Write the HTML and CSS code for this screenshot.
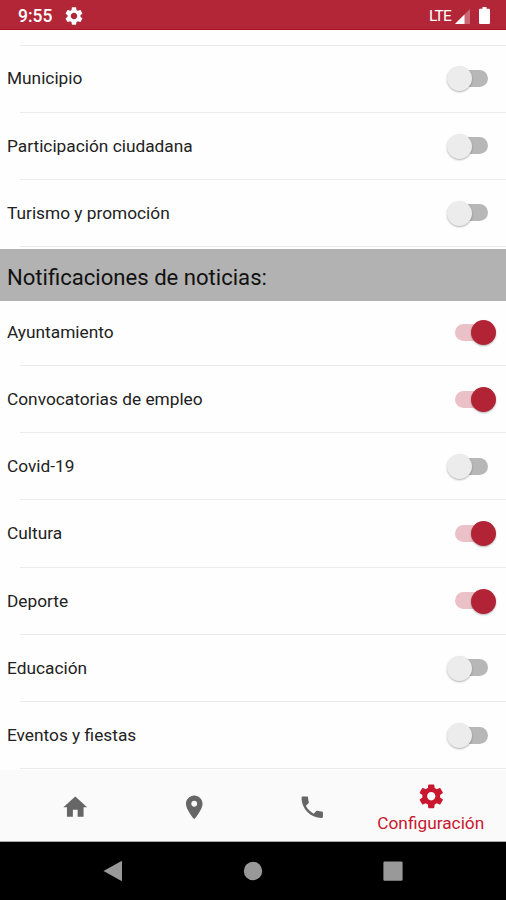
FILE: index.html
```html
<!DOCTYPE html>
<html lang="es">
<head>
  <meta charset="UTF-8" />
  <meta name="viewport" content="width=device-width, initial-scale=1.0"/>
  <title>Configuración</title>
  <link rel="stylesheet" href="styles.css">
</head>
<body>
  <div class="status-bar">
    <span class="time">9:55</span>
    <svg class="status-gear" viewBox="2 2 20 20"><path d="M19.14 12.94c.04-.3.06-.61.06-.94s-.02-.64-.07-.94l2.03-1.58c.18-.14.23-.41.12-.61l-1.92-3.32c-.12-.22-.37-.29-.59-.22l-2.39.96c-.5-.38-1.03-.7-1.62-.94L14.4 2.81c-.04-.24-.24-.41-.48-.41h-3.84c-.24 0-.43.17-.47.41l-.36 2.54c-.59.24-1.13.57-1.62.94l-2.39-.96c-.22-.08-.47 0-.59.22L2.74 8.87c-.12.21-.08.47.12.61l2.03 1.58c-.05.3-.09.63-.09.94s.02.64.07.94l-2.03 1.58c-.18.14-.23.41-.12.61l1.92 3.32c.12.22.37.29.59.22l2.39-.96c.5.38 1.03.7 1.62.94l.36 2.54c.05.24.24.41.48.41h3.84c.24 0 .44-.17.47-.41l.36-2.54c.59-.24 1.13-.56 1.62-.94l2.39.96c.22.08.47 0 .59-.22l1.92-3.32c.12-.22.07-.47-.12-.61l-2.01-1.58zM12 15.6c-1.98 0-3.6-1.62-3.6-3.6s1.62-3.6 3.6-3.6 3.6 1.62 3.6 3.6-1.62 3.6-3.6 3.6z"/></svg>
    <span class="network">LTE</span>
    <svg class="signal" viewBox="0 0 15 15"><path opacity=".3" d="M15 0v15H0z"/><path d="M9.5 5.5V15H0z"/></svg>
    <svg class="battery" viewBox="0 0 11 17"><path d="M3.5 0h4v1.7H10a1 1 0 0 1 1 1V16a1 1 0 0 1-1 1H1a1 1 0 0 1-1-1V2.7a1 1 0 0 1 1-1h2.5z"/></svg>
  </div>

  <main class="content">
    <div class="list list-top">
      <div class="row"><span class="label">Municipio</span><span class="switch"></span></div>
      <div class="row"><span class="label">Participación ciudadana</span><span class="switch"></span></div>
      <div class="row"><span class="label">Turismo y promoción</span><span class="switch"></span></div>
    </div>

    <h2 class="section-title">Notificaciones de noticias:</h2>

    <div class="list">
      <div class="row first"><span class="label">Ayuntamiento</span><span class="switch on"></span></div>
      <div class="row"><span class="label">Convocatorias de empleo</span><span class="switch on"></span></div>
      <div class="row"><span class="label">Covid-19</span><span class="switch"></span></div>
      <div class="row"><span class="label">Cultura</span><span class="switch on"></span></div>
      <div class="row"><span class="label">Deporte</span><span class="switch on"></span></div>
      <div class="row"><span class="label">Educación</span><span class="switch"></span></div>
      <div class="row"><span class="label">Eventos y fiestas</span><span class="switch"></span></div>
    </div>
  </main>

  <nav class="tabs">
    <a class="tab"><svg viewBox="0 0 24 24"><path d="M10 20v-6h4v6h5v-8h3L12 3 2 12h3v8z"/></svg></a>
    <a class="tab"><svg viewBox="0 0 24 24"><path d="M12 2C8.13 2 5 5.13 5 9c0 5.25 7 13 7 13s7-7.75 7-13c0-3.87-3.13-7-7-7zm0 9.5c-1.38 0-2.5-1.12-2.5-2.5s1.12-2.5 2.5-2.5 2.5 1.12 2.5 2.5-1.12 2.5-2.5 2.5z"/></svg></a>
    <a class="tab"><svg viewBox="0 0 24 24"><path d="M6.62 10.79c1.44 2.83 3.76 5.14 6.59 6.59l2.2-2.2c.27-.27.67-.36 1.02-.24 1.12.37 2.33.57 3.57.57.55 0 1 .45 1 1V20c0 .55-.45 1-1 1-9.39 0-17-7.61-17-17 0-.55.45-1 1-1h3.5c.55 0 1 .45 1 1 0 1.25.2 2.45.57 3.57.11.35.03.74-.25 1.02l-2.2 2.2z"/></svg></a>
    <a class="tab active">
      <svg viewBox="0 0 24 24"><path d="M19.43 12.98c.04-.32.07-.64.07-.98s-.03-.66-.07-.98l2.11-1.65c.19-.15.24-.42.12-.64l-2-3.46c-.12-.22-.39-.3-.61-.22l-2.49 1c-.52-.4-1.08-.73-1.69-.98l-.38-2.65C14.46 2.18 14.25 2 14 2h-4c-.25 0-.46.18-.49.42l-.38 2.65c-.61.25-1.17.59-1.69.98l-2.49-1c-.23-.09-.49 0-.61.22l-2 3.46c-.13.22-.07.49.12.64l2.11 1.65c-.04.32-.07.65-.07.98s.03.66.07.98l-2.11 1.65c-.19.15-.24.42-.12.64l2 3.46c.12.22.39.3.61.22l2.49-1c.52.4 1.08.73 1.69.98l.38 2.65c.03.24.24.42.49.42h4c.25 0 .46-.18.49-.42l.38-2.65c.61-.25 1.17-.59 1.69-.98l2.49 1c.23.09.49 0 .61-.22l2-3.46c.12-.22.07-.49-.12-.64l-2.11-1.65zM12 15.5c-1.93 0-3.5-1.57-3.5-3.5s1.57-3.5 3.5-3.5 3.5 1.57 3.5 3.5-1.57 3.5-3.5 3.5z"/></svg>
      <span>Configuración</span>
    </a>
  </nav>

  <div class="system-bar">
    <svg viewBox="0 0 24 24"><path d="M2.5 12 20 2.2q1-.5 1 .6v18.4q0 1.1-1 .6z"/></svg>
    <svg viewBox="0 0 24 24"><circle cx="12" cy="12" r="9.2"/></svg>
    <svg viewBox="0 0 24 24"><rect x="2.4" y="2.6" width="19.2" height="19.2" rx="1.2"/></svg>
  </div>
</body>
</html>
```

FILE: styles.css
```css
* {
  box-sizing: border-box;
}

body {
  display: flex;
  flex-direction: column;
  height: 900px;
  margin: 0;
  overflow: hidden;
  background: #fefefe;
  color: #222;
  font-family: Roboto, sans-serif;
}

.status-bar {
  display: flex;
  align-items: center;
  height: 30px;
  padding: 2px 16px 0 18px;
  background: #b32638;
  border-bottom: 1px solid #ae1126;
  color: #fff;
  flex-shrink: 0;
}

.status-bar svg {
  fill: #fff;
}

.time {
  width: 47px;
  font-size: 17.5px;
  font-weight: 500;
}

.status-gear {
  width: 18px;
  height: 18px;
}

.network {
  margin-left: auto;
  font-size: 15.5px;
  letter-spacing: -0.8px;
}

.signal {
  width: 15px;
  height: 15px;
  margin: 1px 9px 0 4px;
}

.battery {
  width: 11px;
  height: 17px;
}

/* Settings list */
.content {
  height: 740px;
  flex-shrink: 0;
}

.list-top {
  height: 219px;
  padding-top: 15.4px;
}

.row {
  display: flex;
  align-items: center;
  justify-content: space-between;
  height: 67.2px;
  padding: 0 10px 0 7px;
  font-size: 17.3px;
  background: linear-gradient(#ebebeb, #ebebeb) 20px 100% / 100% 1px no-repeat;
}

.list-top .row:first-child {
  background:
    linear-gradient(#ebebeb, #ebebeb) 20px 100% / 100% 1px no-repeat,
    linear-gradient(#ebebeb, #ebebeb) 20px 0 / 100% 1px no-repeat;
}

.row.first {
  height: 65px;
  padding-bottom: 2px;
}

.label {
  padding-bottom: 1px;
}

.section-title {
  display: flex;
  align-items: center;
  height: 52px;
  margin: 0;
  padding: 4px 7px 0;
  background: #b2b2b2;
  color: #111;
  font-size: 22.1px;
  font-weight: 400;
}

.switch {
  display: flex;
  align-items: center;
  width: 37px;
  height: 17px;
  margin: -1px 8px 0 0;
  border-radius: 9px;
  background: #b7b7b7;
}

.switch::before {
  content: "";
  width: 25px;
  height: 25px;
  margin: 1px 0 0 -4px;
  border-radius: 50%;
  background: #ececec;
  box-shadow: 0 1px 2px rgba(0, 0, 0, 0.3);
  flex-shrink: 0;
}

.switch.on {
  justify-content: flex-end;
  margin-right: 4px;
  background: #ebc1c8;
}

.switch.on::before {
  margin: 1px -4px 0 0;
  background: #b32336;
}

/* Bottom tabs */
.tabs {
  display: flex;
  height: 72px;
  padding: 0 16px;
  background: #fafafa;
  border-bottom: 1px solid #aaa;
  flex-shrink: 0;
}

.tab {
  display: flex;
  flex-direction: column;
  align-items: center;
  justify-content: center;
  flex: 1 1 0;
  min-width: 0;
  padding-top: 3px;
}

.tab svg {
  width: 28.5px;
  height: 28.5px;
  fill: #666;
}

.tab.active {
  padding-top: 4px;
  color: #c8172e;
  font-size: 17.3px;
}

.tab.active svg {
  margin-bottom: 2px;
  fill: #c8172e;
}

/* Android navigation */
.system-bar {
  display: flex;
  align-items: center;
  justify-content: center;
  gap: 116px;
  height: 58px;
  background: #000;
  flex-shrink: 0;
}

.system-bar svg {
  width: 24px;
  height: 24px;
  fill: #999;
}
```
